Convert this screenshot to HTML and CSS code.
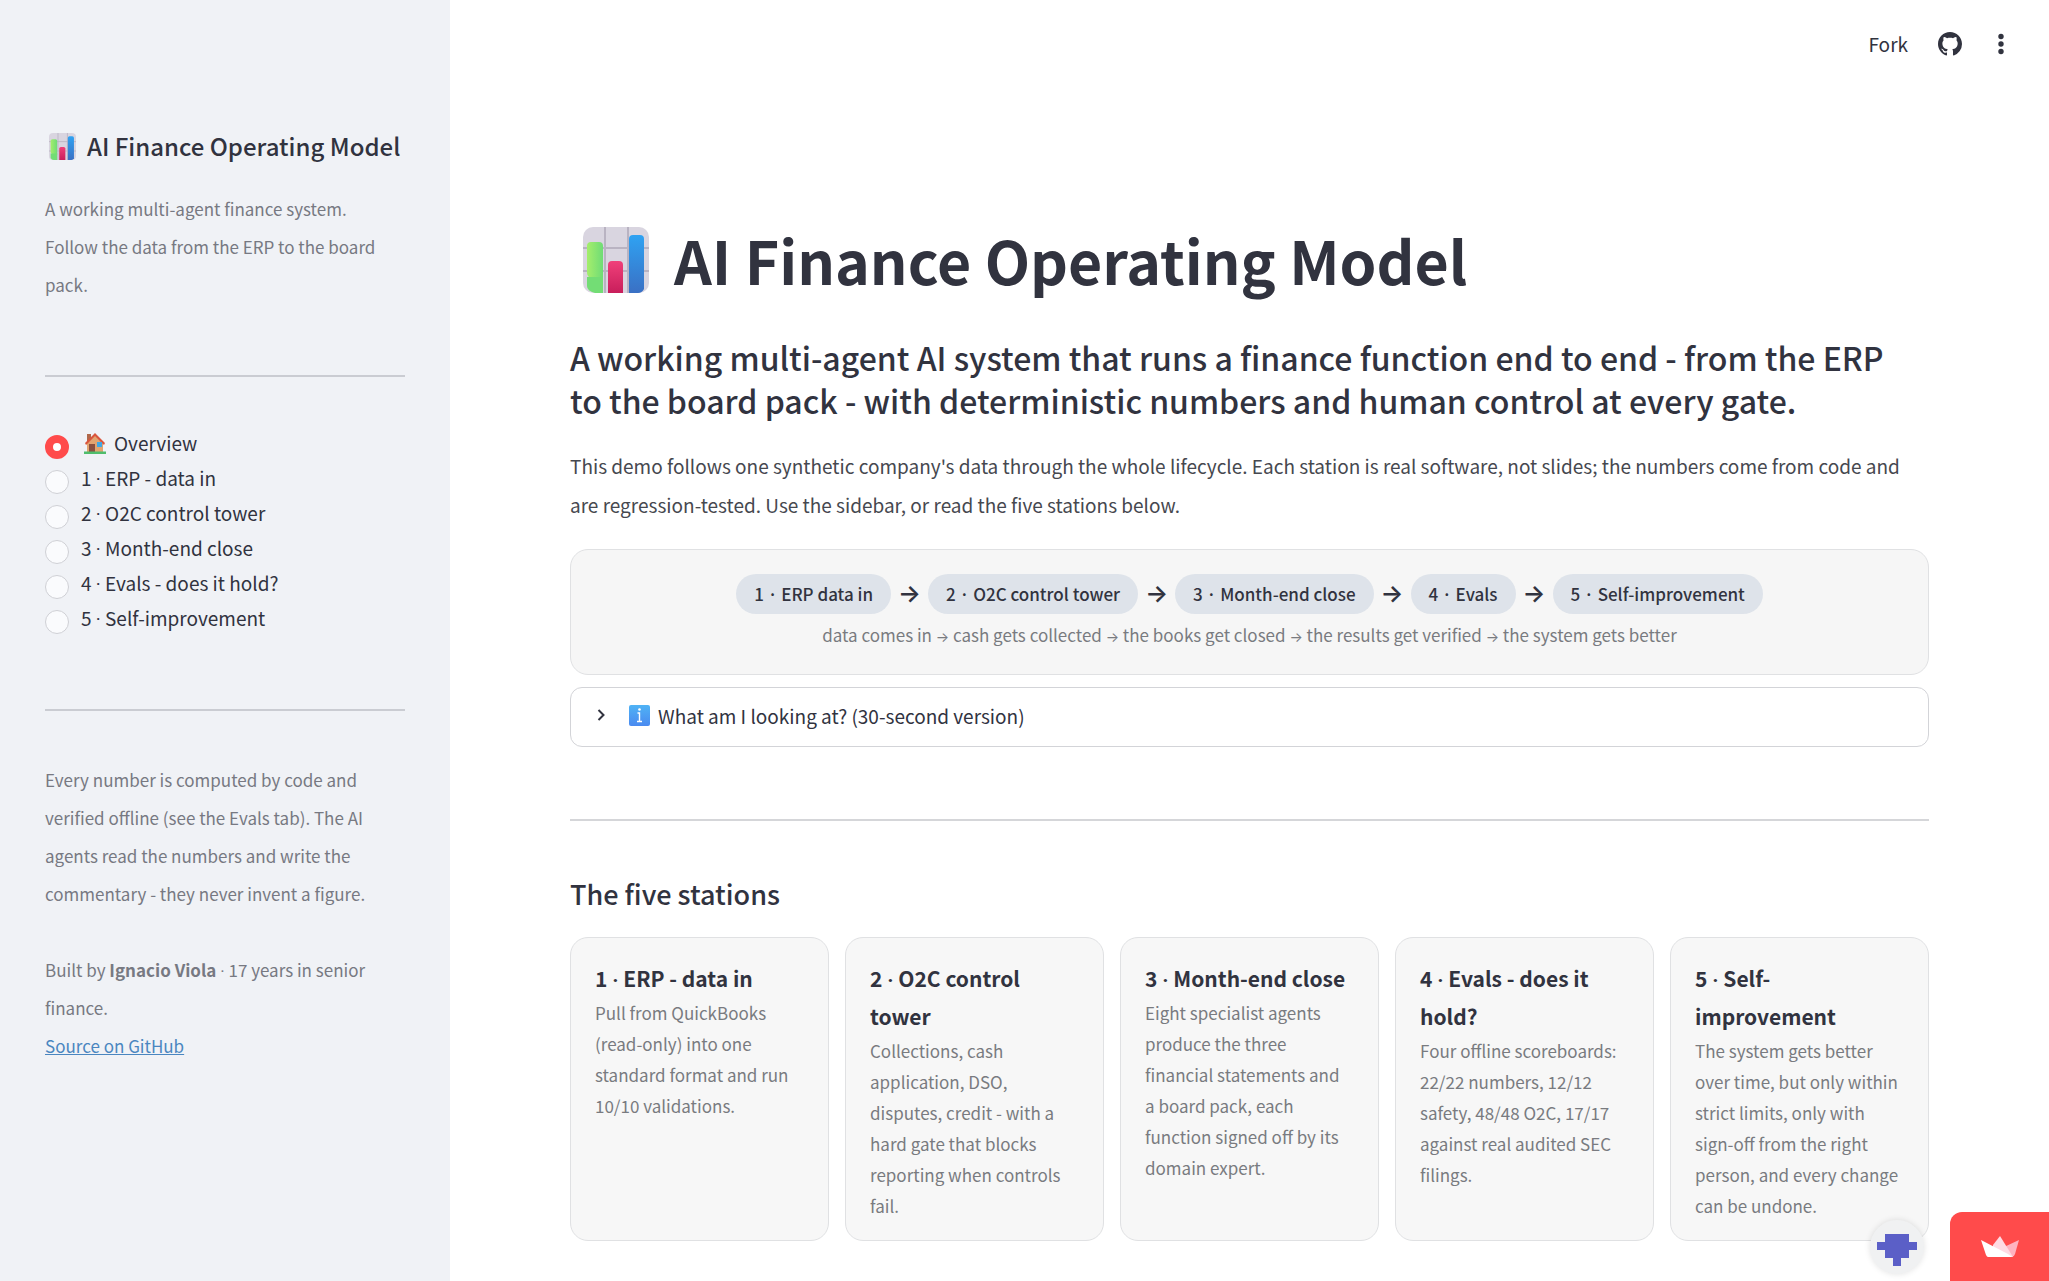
FILE: index.html
```html
<!DOCTYPE html>
<html lang="en">

<head>
  <meta charset="UTF-8">
  <meta name="viewport" content="width=device-width, initial-scale=1.0">
  <title>AI Finance Operating Model</title>
  <link rel="stylesheet" href="styles.css">
</head>

<body>
  <!-- shared artwork -->
  <svg class="defs" aria-hidden="true">
    <defs>
      <linearGradient id="green" x1="0" y1="0" x2="1" y2="0">
        <stop offset="0" stop-color="#a5ee6c" />
        <stop offset="1" stop-color="#6fdc76" />
      </linearGradient>
      <linearGradient id="pink" x1="0" y1="0" x2="0" y2="1">
        <stop offset="0" stop-color="#f0407a" />
        <stop offset="1" stop-color="#c81e5b" />
      </linearGradient>
      <linearGradient id="blue" x1="0" y1="0" x2="0" y2="1">
        <stop offset="0" stop-color="#2fa2f2" />
        <stop offset="1" stop-color="#3a70c4" />
      </linearGradient>
      <linearGradient id="info" x1="0" y1="0" x2="0" y2="1">
        <stop offset="0" stop-color="#4fb3f5" />
        <stop offset="1" stop-color="#4a8af0" />
      </linearGradient>
      <symbol id="chart" viewBox="0 0 66 66">
        <rect width="66" height="66" rx="10" fill="#d9d5e0" />
        <path d="M22 0v66M45 0v66M0 21h66M0 44h66" stroke="#b9b3c2" stroke-width="2" />
        <path d="M4 32q0-4 4-4h8q4 0 4 4v34h-8q-8-2-8-7z" fill="url(#green)" transform="translate(0 -13)" />
        <path d="M4 50h16v16h-8q-8-2-8-7z" fill="#73dd75" />
        <path d="M25 38q0-4 4-4h7q4 0 4 4v28H25z" fill="url(#pink)" />
        <path d="M46 12q0-4 4-4h7q4 0 4 4v50q-2 4-6 4h-9z" fill="url(#blue)" />
      </symbol>
    </defs>
  </svg>

  <aside class="sidebar">
    <h2 class="sidebar-title">
      <svg class="title-icon" aria-hidden="true"><use href="#chart" /></svg>AI Finance Operating Model
    </h2>
    <p class="caption">A working multi-agent finance system. Follow the data from the ERP to the board pack.</p>
    <hr>
    <div class="nav" role="radiogroup" aria-label="Station">
      <label class="nav-item"><input type="radio" name="station" checked>
        <span class="nav-text"><svg class="house" viewBox="0 0 22 21" aria-hidden="true">
            <path d="M3 1h4v7H3z" fill="#b0684a" />
            <path d="M3 9l8-8 8 8v11H3z" fill="#e2a470" />
            <path d="M1 10L11 0l10 10-1 2-9-9-9 9z" fill="#d9553d" />
            <path d="M5 11h6v9H5z" fill="#8a5040" />
            <path d="M13 9h5v5h-5z" fill="#3fa8e4" />
            <path d="M0 18.500h22V21H0z" fill="#4fbd6c" />
          </svg>Overview</span></label>
      <label class="nav-item"><input type="radio" name="station"><span class="nav-text">1 <i class="dot">·</i> ERP - data in</span></label>
      <label class="nav-item"><input type="radio" name="station"><span class="nav-text">2 <i class="dot">·</i> O2C control tower</span></label>
      <label class="nav-item"><input type="radio" name="station"><span class="nav-text">3 <i class="dot">·</i> Month-end close</span></label>
      <label class="nav-item"><input type="radio" name="station"><span class="nav-text">4 <i class="dot">·</i> Evals - does it hold?</span></label>
      <label class="nav-item"><input type="radio" name="station"><span class="nav-text">5 <i class="dot">·</i> Self-improvement</span></label>
    </div>
    <hr>
    <p class="caption">Every number is computed by code and verified offline (see the Evals tab). The AI agents read the numbers and write the commentary - they never invent a figure.</p>
    <p class="caption">Built by <strong>Ignacio Viola</strong> <i class="dot">·</i> 17 years in senior finance.<br>
      <a href="#">Source on GitHub</a></p>
  </aside>

  <div class="page">
    <header class="toolbar">
      <button type="button">Fork</button>
      <a href="#" aria-label="View on GitHub">
        <svg width="24" height="24" viewBox="0 0 16 16" fill="#31333f">
          <path d="M8 0C3.580 0 0 3.580 0 8c0 3.540 2.290 6.530 5.470 7.590.4.070.55-.17.55-.38 0-.19-.01-.82-.01-1.490-2.010.37-2.530-.49-2.690-.94-.09-.23-.48-.94-.82-1.130-.28-.15-.68-.52-.01-.53.63-.01 1.080.58 1.230.82.72 1.210 1.870.87 2.330.66.07-.52.28-.87.51-1.070-1.780-.2-3.640-.89-3.640-3.950 0-.87.31-1.590.82-2.150-.08-.2-.36-1.020.08-2.120 0 0 .67-.21 2.200.82.64-.18 1.320-.27 2-.27s1.360.09 2 .27c1.530-1.040 2.200-.82 2.200-.82.44 1.100.16 1.920.08 2.120.51.56.82 1.270.82 2.150 0 3.070-1.870 3.750-3.650 3.950.29.25.54.73.54 1.480 0 1.070-.01 1.930-.01 2.200 0 .21.15.46.55.38A8.010 8.010 0 0 0 16 8c0-4.420-3.580-8-8-8z" />
        </svg>
      </a>
      <button type="button" aria-label="Main menu">
        <svg width="24" height="24" viewBox="0 0 24 24" fill="#31333f">
          <circle cx="12" cy="4.500" r="2.700" />
          <circle cx="12" cy="12" r="2.700" />
          <circle cx="12" cy="19.500" r="2.700" />
        </svg>
      </button>
    </header>

    <main class="content">
      <h1><svg class="title-icon" aria-hidden="true"><use href="#chart" /></svg>AI Finance Operating Model</h1>
      <h2 class="tagline">A working multi-agent AI system that runs a finance function end to end - from the ERP to the board pack - with deterministic numbers and human control at every gate.</h2>
      <p class="intro">This demo follows one synthetic company's data through the whole lifecycle. Each station is real software, not slides; the numbers come from code and are regression-tested. Use the sidebar, or read the five stations below.</p>

      <section class="flow">
        <div class="steps">
          <span class="pill">1 · ERP data in</span><span class="arrow">→</span>
          <span class="pill">2 · O2C control tower</span><span class="arrow">→</span>
          <span class="pill">3 · Month-end close</span><span class="arrow">→</span>
          <span class="pill">4 · Evals</span><span class="arrow">→</span>
          <span class="pill">5 · Self-improvement</span>
        </div>
        <p class="flow-note">data comes in <i>→</i> cash gets collected <i>→</i> the books get closed <i>→</i> the results get verified <i>→</i> the system gets better</p>
      </section>

      <details class="expander">
        <summary>
          <svg class="chevron" viewBox="0 0 8 12" aria-hidden="true"><path d="M1.500 1l5 5-5 5" fill="none" stroke="#31333f" stroke-width="2" /></svg>
          <svg class="info" viewBox="0 0 21 21" aria-hidden="true">
            <rect width="21" height="21" rx="2" fill="url(#info)" />
            <circle cx="10.500" cy="4.500" r="1.300" fill="#fff" />
            <path d="M8.500 8h2v8M8 16.500h5" stroke="#fff" stroke-width="1.400" fill="none" />
          </svg>
          What am I looking at? (30-second version)
        </summary>
      </details>

      <hr>

      <h3>The five stations</h3>
      <section class="cards">
        <article class="card">
          <h4>1 <i class="dot">·</i> ERP - data in</h4>
          <p>Pull from QuickBooks (read-only) into one standard format and run 10/10 validations.</p>
        </article>
        <article class="card">
          <h4>2 <i class="dot">·</i> O2C control tower</h4>
          <p>Collections, cash application, DSO, disputes, credit - with a hard gate that blocks reporting when controls fail.</p>
        </article>
        <article class="card">
          <h4>3 <i class="dot">·</i> Month-end close</h4>
          <p>Eight specialist agents produce the three financial statements and a board pack, each function signed off by its domain expert.</p>
        </article>
        <article class="card">
          <h4>4 <i class="dot">·</i> Evals - does it hold?</h4>
          <p>Four offline scoreboards: 22/22 numbers, 12/12 safety, 48/48 O2C, 17/17 against real audited SEC filings.</p>
        </article>
        <article class="card">
          <h4>5 <i class="dot">·</i> Self-improvement</h4>
          <p>The system gets better over time, but only within strict limits, only with sign-off from the right person, and every change can be undone.</p>
        </article>
      </section>
    </main>
  </div>

  <div class="badges">
    <a class="avatar" href="#" aria-label="Creator profile">
      <svg width="40" height="32" viewBox="0 0 5 4" fill="#5b5fc7" shape-rendering="crispEdges">
        <path d="M1 0h3v1h1v1H4v1H3v1H2V3H1V2H0V1h1z" />
      </svg>
    </a>
    <a class="host" href="#" aria-label="Hosted with Streamlit">
      <svg width="40" height="22" viewBox="0 0 40 22">
        <path d="M39 4L24 11l8 10q2 0 3-3z" fill="#ffb3c0" />
        <path d="M20 0l13 21H12L13 9z" fill="#ffdbe3" />
        <path d="M1 4l27 14 4 3H8q-1 0-2-2z" fill="#fff" />
      </svg>
    </a>
  </div>
</body>

</html>
```

FILE: styles.css
```css
* {
  box-sizing: border-box;
}

body {
  display: flex;
  min-height: 100vh;
  margin: 0;
  background: #fff;
  color: #31333f;
  font-family: "Noto Sans CJK KR", "Noto Sans", sans-serif;
  font-size: 19px;
  line-height: 39px;
}

h1, h2, h3, h4, p {
  margin: 0;
}

hr {
  width: 100%;
  height: 2px;
  margin: 0;
  border: 0;
  background: #d5d6d9;
}

button {
  padding: 0;
  border: 0;
  background: none;
  color: inherit;
  font: inherit;
  cursor: pointer;
}

.defs {
  position: absolute;
  width: 0;
  height: 0;
}

/* the CJK middle dot is too wide between Latin words */
.dot {
  font-family: Roboto, sans-serif;
  font-style: normal;
  line-height: 1;
}

/* Sidebar */
.sidebar {
  flex: 0 0 450px;
  padding: 127px 45px 0;
  background: #f0f2f6;
}

.sidebar-title {
  display: flex;
  align-items: center;
  font-size: 24px;
  font-weight: 500;
  line-height: 38px;
  white-space: nowrap;
}

.sidebar-title .title-icon {
  width: 27px;
  height: 27px;
  margin: 0 11px 0 4px;
}

.caption {
  padding-right: 12px;
  color: #777982;
  font-size: 17px;
  line-height: 38px;
}

.sidebar-title + .caption {
  margin-top: 25px;
}

.caption + .caption {
  margin-top: 38px;
}

.caption a {
  color: #4a86c0;
}

.sidebar hr {
  margin: 71px 0 50px;
  background: #caccd2;
}

.nav {
  display: flex;
  flex-direction: column;
  padding-bottom: 1px;
}

.nav-item {
  display: flex;
  align-items: center;
  height: 35px;
  cursor: pointer;
}

.nav-item input {
  appearance: none;
  width: 24px;
  height: 24px;
  margin: 4px 12px 0 0;
  border: 1px solid #cfd0d5;
  border-radius: 50%;
  background: #fafbfd;
}

.nav-item input:checked {
  border: 8px solid #ff4b4b;
  background: #fff;
}

.nav-text {
  margin-bottom: 3px;
  line-height: 30px;
}

.house {
  width: 22px;
  height: 21px;
  margin: 0 8px 0 3px;
  vertical-align: -3px;
}

/* Main column */
.page {
  flex: 1;
  min-width: 0;
}

.toolbar {
  display: flex;
  align-items: center;
  justify-content: flex-end;
  gap: 27px;
  height: 87px;
  padding-right: 36px;
}

.toolbar a,
.toolbar button {
  display: flex;
}

.toolbar button:first-child {
  margin-right: 3px;
}

.content {
  padding: 133px 120px 40px;
}

h1 {
  display: flex;
  align-items: center;
  font-size: 59px;
  font-weight: 700;
  line-height: 79px;
}

h1 .title-icon {
  width: 66px;
  height: 66px;
  margin: 0 25px 0 13px;
}

.tagline {
  margin-top: 37px;
  padding-right: 20px;
  font-size: 32px;
  font-weight: 500;
  line-height: 43px;
}

.intro {
  margin-top: 24px;
  color: #46484f;
}

.flow {
  margin-top: 25px;
  padding: 24px 24px 22px;
  border: 1px solid #e0e1e3;
  border-radius: 18px;
  background: #f6f6f6;
  text-align: center;
}

.steps {
  display: flex;
  flex-wrap: wrap;
  justify-content: center;
}

.pill {
  padding: 0 18px;
  border-radius: 20px;
  background: #dee3ea;
  font-size: 17px;
  font-weight: 500;
  line-height: 40px;
}

.arrow {
  width: 37px;
  font-family: Inter, sans-serif;
  font-size: 24px;
  font-weight: 600;
  line-height: 40px;
}

.flow-note {
  margin-top: 6px;
  color: #797b80;
  font-size: 17px;
  line-height: 30px;
}

.flow-note i {
  font-family: Inter, sans-serif;
  font-size: 14px;
  font-style: normal;
}

.expander {
  margin-top: 12px;
  border: 1px solid #d3d4d8;
  border-radius: 12px;
}

.expander summary {
  display: flex;
  align-items: center;
  height: 58px;
  padding: 0 26px 4px;
  cursor: pointer;
}

.chevron {
  width: 8px;
  height: 12px;
  margin-right: 24px;
}

.info {
  width: 21px;
  height: 21px;
  margin-right: 8px;
}

.content hr {
  margin: 72px 0 50px;
}

h3 {
  font-size: 27px;
  font-weight: 500;
  line-height: 46px;
}

.cards {
  display: grid;
  grid-template-columns: repeat(5, 1fr);
  gap: 16px;
  margin-top: 20px;
}

.card {
  padding: 21px 28px 19px 24px;
  border: 1px solid #e0e1e3;
  border-radius: 18px;
  background: #f7f7f7;
}

h4 {
  font-size: 21px;
  font-weight: 700;
  line-height: 38px;
}

.card p {
  color: #797b80;
  font-size: 17px;
  line-height: 31px;
}

/* Floating badges, bottom right */
.badges {
  position: fixed;
  right: 0;
  bottom: 0;
  display: flex;
  align-items: flex-end;
  gap: 26px;
}

.avatar {
  display: flex;
  align-items: center;
  justify-content: center;
  width: 54px;
  height: 54px;
  margin-bottom: 7px;
  padding-top: 6px;
  border-radius: 50%;
  background: #f0f1f2;
  box-shadow: 0 0 6px rgba(0, 0, 0, 0.12);
}

.host {
  display: flex;
  align-items: center;
  justify-content: center;
  width: 99px;
  height: 69px;
  border-top-left-radius: 12px;
  background: #ff4b4b;
}
```
